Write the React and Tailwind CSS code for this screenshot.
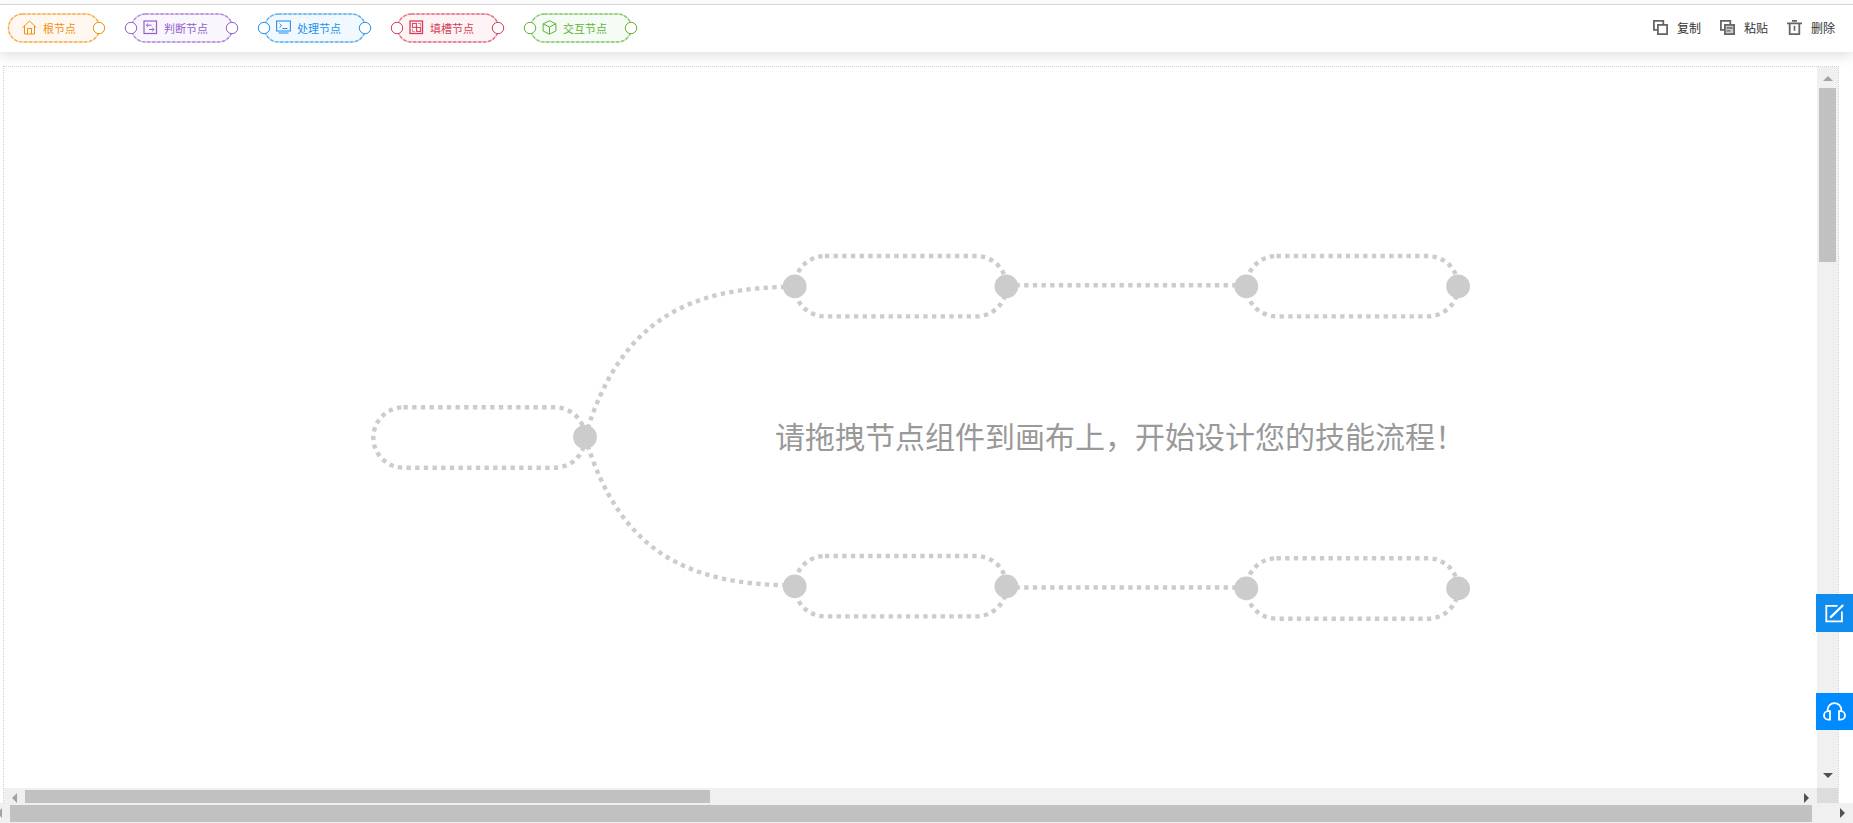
import React from "react";

const ICON = { fill: "none", stroke: "currentColor" };

function HomeIcon() {
  return (
    <svg width="15" height="15" viewBox="0 0 15 15" {...ICON} aria-hidden="true">
      <path d="M0.6 7.6 7.5 1l6.9 6.6M2.5 6v8h10V6" />
      <path d="M5.5 14V8.5h4V14" />
    </svg>
  );
}

function BranchIcon() {
  return (
    <svg width="15" height="15" viewBox="0 0 15 15" {...ICON} aria-hidden="true">
      <rect x="1" y="1" width="12.5" height="12.5" strokeWidth="1.2" />
      <path d="M3.5 5.2h5M5.2 3.4 3.3 5.2l1.9 1.8M6 9.5h5M9.3 7.7l1.9 1.8-1.9 1.8" />
    </svg>
  );
}

function TerminalIcon() {
  return (
    <svg width="15" height="15" viewBox="0 0 15 15" {...ICON} aria-hidden="true">
      <rect x="0.6" y="1" width="13.8" height="10" strokeWidth="1.1" />
      <path d="M3.5 3.6 5.6 5.6 3.5 7.6M6.5 8.5h5" />
      <path d="M2.5 13h10" strokeOpacity="0.75" strokeWidth="1.4" />
    </svg>
  );
}

function SlotIcon() {
  return (
    <svg width="15" height="15" viewBox="0 0 15 15" {...ICON} aria-hidden="true">
      <rect x="1" y="1" width="12.5" height="12.5" strokeWidth="1.3" />
      <rect x="3.4" y="3.4" width="4" height="4" />
      <rect x="7.6" y="7.4" width="4" height="4" />
      <path d="M9 3.5h2.6V6M3.4 9v2.6H6" strokeOpacity="0.6" />
    </svg>
  );
}

function CubeIcon() {
  return (
    <svg width="15" height="15" viewBox="0 0 15 15" {...ICON} aria-hidden="true">
      <path d="M7.5 0.8 13.9 3.8v7.2L7.5 14.2 1.1 11V3.8z" />
      <path d="M1.1 3.8 7.5 7l6.4-3.2M7.5 7v7" />
    </svg>
  );
}

function CopyIcon() {
  return (
    <svg width="15" height="15" viewBox="0 0 15 15" {...ICON} strokeWidth="1.8" aria-hidden="true">
      <path d="M4 9.9H0.9V0.9h9.4v3" />
      <rect x="4.9" y="4.9" width="9.2" height="9.2" />
    </svg>
  );
}

function PasteIcon() {
  return (
    <svg width="15" height="15" viewBox="0 0 15 15" {...ICON} strokeWidth="1.8" aria-hidden="true">
      <path d="M4 9.9H0.9V0.9h9.4v3" />
      <rect x="4.9" y="4.9" width="9.2" height="9.2" fill="#ccc" />
      <path d="M6.5 8h6M6.5 10.9h4" strokeWidth="1.4" />
    </svg>
  );
}

function TrashIcon() {
  return (
    <svg width="15" height="15" viewBox="0 0 15 15" {...ICON} strokeWidth="1.8" aria-hidden="true">
      <path d="M0 3.4h15M5 0.9h5M2.7 3.4v10.7h9.6V3.4" />
      <path d="M7.5 5.8v5" strokeWidth="1.6" />
    </svg>
  );
}

function EditIcon() {
  return (
    <svg width="19" height="19" viewBox="0 0 19 19" {...ICON} strokeWidth="1.8" aria-hidden="true">
      <path d="M12.5 1.9H1.3v15.4h15.6V7.5" />
      <path d="M5.2 13.6 18.2 1" strokeWidth="2.2" />
    </svg>
  );
}

function HeadsetIcon() {
  return (
    <svg width="23" height="19" viewBox="0 0 23 19" {...ICON} strokeWidth="1.8" aria-hidden="true">
      <path d="M4.6 9.3V8a6.9 6.9 0 0 1 13.8 0v1.3" />
      <path d="M7 9.2v8.4H5.2a4.2 4.2 0 0 1 0-8.4zM16 9.2v8.4h1.8a4.2 4.2 0 0 0 0-8.4z" />
    </svg>
  );
}

const NODES = [
  { label: "根节点", Icon: HomeIcon, tone: "w-[92px] pl-3.5 text-[#f39010]", tint: "#fff8f0", root: true },
  { label: "判断节点", Icon: BranchIcon, tone: "w-[102px] pl-3 text-[#9360cb]", tint: "#f9f6fd" },
  { label: "处理节点", Icon: TerminalIcon, tone: "w-[102px] pl-3 text-[#2491ec]", tint: "#f2f8ff" },
  { label: "填槽节点", Icon: SlotIcon, tone: "w-[102px] pl-3 text-[#d63c57]", tint: "#fff4f5" },
  { label: "交互节点", Icon: CubeIcon, tone: "w-[102px] pl-3 text-[#60b336]", tint: "#f5fbf5" },
];

const ACTIONS = [
  { label: "复制", Icon: CopyIcon },
  { label: "粘贴", Icon: PasteIcon },
  { label: "删除", Icon: TrashIcon },
];

function PaletteNode({ label, Icon, tone, tint, root }) {
  const width = root ? 92 : 102;
  return (
    <button type="button" draggable className={`relative flex h-[30px] cursor-move items-center ${tone}`}>
      <svg
        className="absolute inset-0 overflow-visible"
        width={width}
        height="30"
        fill="none"
        stroke="currentColor"
        aria-hidden="true"
      >
        <rect x="0.5" y="1" width={width - 1} height="28" rx="14" fill={tint} strokeOpacity="0.35" strokeWidth="1.4" />
        <rect x="0.5" y="1" width={width - 1} height="28" rx="14" strokeOpacity="0.6" strokeWidth="1.4" strokeDasharray="3 2" />
        {!root && <circle cx="0" cy="15" r="5.7" fill="#fff" />}
        <circle cx={width - 1} cy="15" r="5.7" fill="#fff" />
      </svg>
      <span className="relative flex items-center gap-1.5">
        <Icon />
        <span className="text-[11px] leading-4">{label}</span>
      </span>
    </button>
  );
}

function Arrow({ direction, muted }) {
  const points = {
    up: "5,0 10,5 0,5",
    down: "0,0 10,0 5,5",
    left: "5,0 5,10 0,5",
    right: "0,0 5,5 0,10",
  };
  const flat = direction === "up" || direction === "down";
  return (
    <svg
      className={muted ? "shrink-0 fill-[#a3a3a3]" : "shrink-0 fill-[#505050]"}
      width={flat ? 10 : 5}
      height={flat ? 5 : 10}
      aria-hidden="true"
    >
      <polygon points={points[direction]} />
    </svg>
  );
}

function pillPath(x, y) {
  return `M${x + 30.2} ${y}h151.4a30.2 30.2 0 0 1 0 60.4h-151.4a30.2 30.2 0 0 1 0 -60.4`;
}

const JOINTS = [
  [585, 437],
  [794.7, 286.3],
  [1006.4, 286.3],
  [1246.3, 286.3],
  [1458.1, 286.3],
  [794.7, 586.3],
  [1006.4, 586.3],
  [1246.3, 588.4],
  [1458.1, 588.4],
];

function FlowDiagram() {
  return (
    <div className="relative">
      <svg width="1100" height="372" viewBox="371 249 1100 372" fill="none" aria-hidden="true">
        <g stroke="#ccc" strokeWidth="4.4" strokeDasharray="4.33 4.34">
          <path d={pillPath(373.3, 407.3)} />
          <path d={pillPath(794.7, 256)} />
          <path d={pillPath(1246.3, 256)} />
          <path d={pillPath(794.7, 556)} />
          <path d={pillPath(1246.3, 558.3)} />
          <path d="M585 437C620 319 690 286.8 795 286.8" />
          <path d="M585 437C620 554 690 585.3 795 585.3" />
          <path d="M1015.5 285.3H1246M1015.5 587.5H1246" />
        </g>
        <g fill="#ccc">
          {JOINTS.map(([x, y]) => (
            <circle key={`${x}-${y}`} cx={x} cy={y} r="11.9" />
          ))}
        </g>
      </svg>
      <p className="absolute top-[162px] left-[404px] text-[30px] leading-[48px] whitespace-nowrap text-[#999]">
        请拖拽节点组件到画布上，开始设计您的技能流程！
      </p>
    </div>
  );
}

export default function App() {
  return (
    <div className="flex h-screen min-h-[560px] flex-col overflow-hidden bg-white pt-1 font-['Noto_Sans_CJK_SC','Liberation_Sans',sans-serif]">
      <header className="flex h-12 shrink-0 items-center justify-between border-t border-[#d6d6d6] pr-[18px] pb-0.5 pl-2 shadow-[0_4px_12px_rgba(0,0,0,0.12)]">
        <div className="flex gap-[31px]">
          {NODES.map((node) => (
            <PaletteNode key={node.label} {...node} />
          ))}
        </div>
        <div className="flex gap-[19px]">
          {ACTIONS.map(({ label, Icon }) => (
            <button key={label} type="button" className="flex items-center gap-[9px] text-[#666]">
              <Icon />
              <span className="text-xs leading-4 text-[#333]">{label}</span>
            </button>
          ))}
        </div>
      </header>

      <main className="mt-3.5 mr-3.5 ml-[3px] grid min-h-0 flex-1 grid-cols-[minmax(0,1fr)_21px] grid-rows-[minmax(0,1fr)_15px] border border-b-0 border-dotted border-[#d0d0d0]">
        <section className="col-span-2 col-start-1 row-span-2 row-start-1 place-self-center">
          <FlowDiagram />
        </section>

        <div className="col-start-2 row-start-1 flex flex-col items-center bg-[#f0f0f0] pt-[9px] pb-[10px]">
          <Arrow direction="up" muted />
          <div className="my-[7px] w-[17px] flex-1">
            <div className="h-[25.6%] bg-[#c1c1c1]" />
          </div>
          <Arrow direction="down" />
        </div>

        <div className="col-start-1 row-start-2 flex items-end bg-[#f0f0f0] px-2">
          <Arrow direction="left" muted />
          <div className="ml-2 h-[13px] flex-1">
            <div className="h-full w-[38.5%] bg-[#c1c1c1]" />
          </div>
          <Arrow direction="right" />
        </div>

        <div className="col-start-2 row-start-2 bg-[#dcdcdc]" />
      </main>

      <footer className="flex h-5 shrink-0 items-center bg-[#f0f0f0] pr-2">
        <div className="flex w-2.5 justify-start">
          <svg className="fill-[#a3a3a3]" width="2" height="10" aria-hidden="true">
            <polygon points="0,2 2,0 2,10 0,8" />
          </svg>
        </div>
        <div className="mr-7 h-[17px] flex-1 bg-[#c1c1c1]" />
        <Arrow direction="right" />
      </footer>

      <aside className="fixed right-0 bottom-[93px] flex w-[37px] flex-col gap-[61px] text-white">
        <button type="button" aria-label="反馈" className="flex h-[38px] items-center justify-center bg-[#108cee]">
          <EditIcon />
        </button>
        <button type="button" aria-label="客服" className="flex h-[37px] items-center justify-center bg-[#008aff]">
          <HeadsetIcon />
        </button>
      </aside>
    </div>
  );
}
